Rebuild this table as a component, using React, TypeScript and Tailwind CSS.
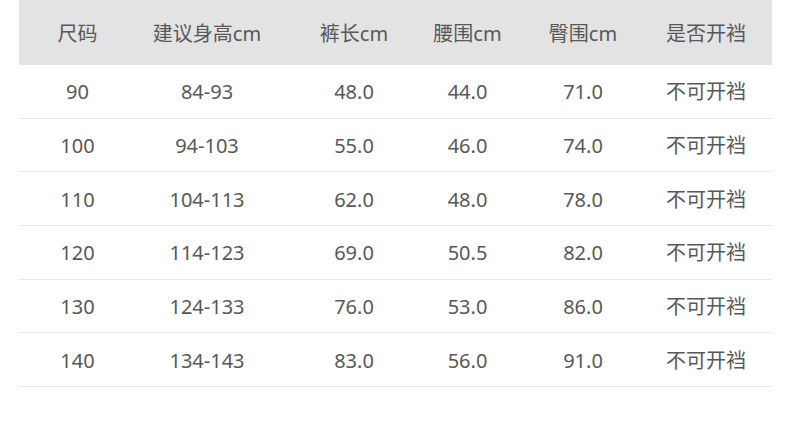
const headers = ["尺码", "建议身高cm", "裤长cm", "腰围cm", "臀围cm", "是否开裆"];

const rows = [
  ["90", "84-93", "48.0", "44.0", "71.0", "不可开裆"],
  ["100", "94-103", "55.0", "46.0", "74.0", "不可开裆"],
  ["110", "104-113", "62.0", "48.0", "78.0", "不可开裆"],
  ["120", "114-123", "69.0", "50.5", "82.0", "不可开裆"],
  ["130", "124-133", "76.0", "53.0", "86.0", "不可开裆"],
  ["140", "134-143", "83.0", "56.0", "91.0", "不可开裆"],
];

// column widths picked so each label sits centred where the picture has it
const cols = "grid grid-cols-[117px_142px_152px_75px_156px_90px_1fr]";

function Cell({ text }: { text: string }) {
  return (
    <div className="flex items-center justify-center whitespace-nowrap pt-[2px]">
      {text}
    </div>
  );
}

export default function App() {
  return (
    <div
      className="w-[790px] h-[431px] bg-white text-[#585858] text-[20px]"
      style={{ fontFamily: '"Noto Sans", "Noto Sans CJK SC", sans-serif' }}
    >
      <div className="ml-[19px] w-[753px]">
        <div className={`${cols} h-[65px] bg-[#e3e3e3]`}>
          {headers.map((h) => (
            <Cell key={h} text={h} />
          ))}
          <div />
        </div>
        {rows.map((r) => (
          <div
            key={r[0]}
            className={`${cols} h-[53.67px] border-b border-[#e8e8e8] box-border`}
          >
            {r.map((c, i) => (
              <Cell key={i} text={c} />
            ))}
            <div />
          </div>
        ))}
      </div>
    </div>
  );
}
